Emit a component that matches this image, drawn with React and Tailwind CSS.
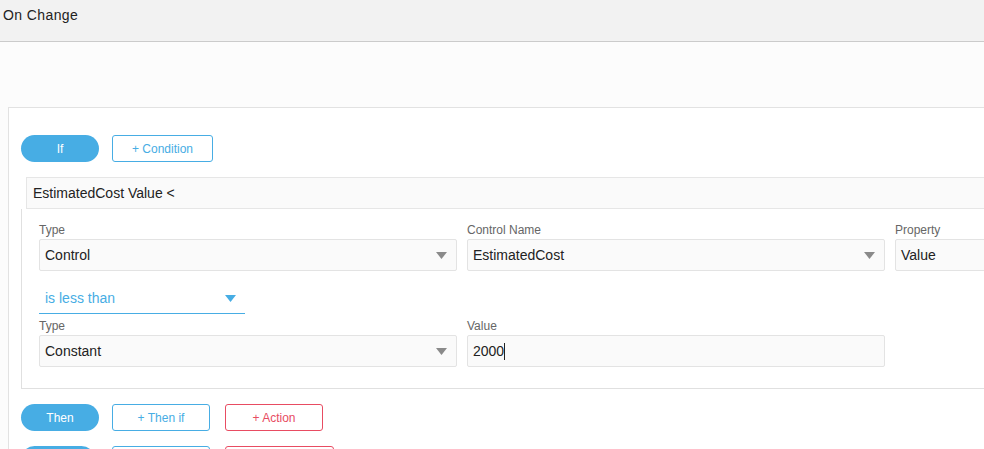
import { useState } from "react";

const Caret = ({ color = "#8a8a8a" }) => (
    <svg width="11" height="7" viewBox="0 0 11 7" className="shrink-0">
        <path d="M0 0 L11 0 L5.5 7 Z" fill={color} />
    </svg>
)

const Field = ({ label, children }) => (
    <div className="w-[418px] shrink-0">
        <div className="text-[12px] leading-[16px] text-[#666]">{label}</div>
        <div className="mt-[1px]">{children}</div>
    </div>
)

const Select = ({ value, caret = true }) => (
    <div className="h-[32px] flex items-center justify-between pl-[5px] pr-[9px] bg-[#fafafa] border border-[#e3e3e3] rounded-[2px] text-[14px] text-[#222]">
        <span>{value}</span>
        {caret && <Caret />}
    </div>
)

const App = () => {

    const [valor] = useState('2000')

    return (
        <div className="w-[984px] h-[449px] overflow-hidden bg-[#fcfcfc] font-['Liberation_Sans',Arial,sans-serif]">
            <div className="h-[42px] bg-[#f2f2f2] border-b border-[#cbcbcb] pl-[3px] pt-[5px] text-[14px] text-[#222] tracking-[0.4px]">
                On Change
            </div>

            <div className="pt-[65px] pl-[8px]">
                <div className="w-[1100px] bg-white border-t border-l border-[#e2e2e2] pl-[12px] pt-[27px]">
                    <div className="flex items-center gap-[13px]">
                        <button className="w-[78px] h-[27px] rounded-full bg-[#47ade4] text-white text-[12px]">If</button>
                        <button className="w-[101px] h-[27px] rounded-[3px] border border-[#47ade4] text-[#47ade4] text-[12px]">+ Condition</button>
                    </div>

                    <div className="mt-[15px] ml-[5px] h-[32px] flex items-center pl-[6px] bg-[#fafafa] border border-[#e6e6e6] text-[14px] text-[#222]">
                        EstimatedCost Value &lt;
                    </div>

                    <div className="border-l border-b border-[#e0e0e0] pl-[17px] pt-[13px] pb-[21px]">
                        <div className="flex gap-[10px]">
                            <Field label="Type"><Select value="Control" /></Field>
                            <Field label="Control Name"><Select value="EstimatedCost" /></Field>
                            <Field label="Property"><Select value="Value" caret={false} /></Field>
                        </div>

                        <div className="mt-[13px] w-[206px] h-[30px] flex items-center justify-between pl-[6px] pr-[9px] border-b border-[#47ade4] text-[14px] text-[#47ade4]">
                            <span>is less than</span>
                            <Caret color="#47ade4" />
                        </div>

                        <div className="flex gap-[10px] mt-[4px]">
                            <Field label="Type"><Select value="Constant" /></Field>
                            <Field label="Value">
                                <div className="h-[32px] flex items-center pl-[5px] bg-[#fafafa] border border-[#e3e3e3] rounded-[2px] text-[14px] text-[#222]">
                                    <span>{valor}</span>
                                    <span className="w-px h-[17px] bg-[#222]"></span>
                                </div>
                            </Field>
                        </div>
                    </div>

                    <div className="flex items-center mt-[15px]">
                        <button className="w-[78px] h-[27px] rounded-full bg-[#47ade4] text-white text-[12px]">Then</button>
                        <button className="ml-[13px] w-[98px] h-[27px] rounded-[3px] border border-[#47ade4] text-[#47ade4] text-[12px]">+ Then if</button>
                        <button className="ml-[15px] w-[98px] h-[27px] rounded-[3px] border border-[#e84c62] text-[#e84c62] text-[12px]">+ Action</button>
                    </div>

                    <div className="flex items-center mt-[15px]">
                        <button className="w-[74px] h-[27px] rounded-full bg-[#47ade4] text-white text-[12px]"></button>
                        <button className="ml-[17px] w-[98px] h-[27px] rounded-[3px] border border-[#47ade4] text-[#47ade4] text-[12px]"></button>
                        <button className="ml-[15px] w-[109px] h-[27px] rounded-[3px] border border-[#e84c62] text-[#e84c62] text-[12px]"></button>
                    </div>
                </div>
            </div>
        </div>
    )
}

export default App
